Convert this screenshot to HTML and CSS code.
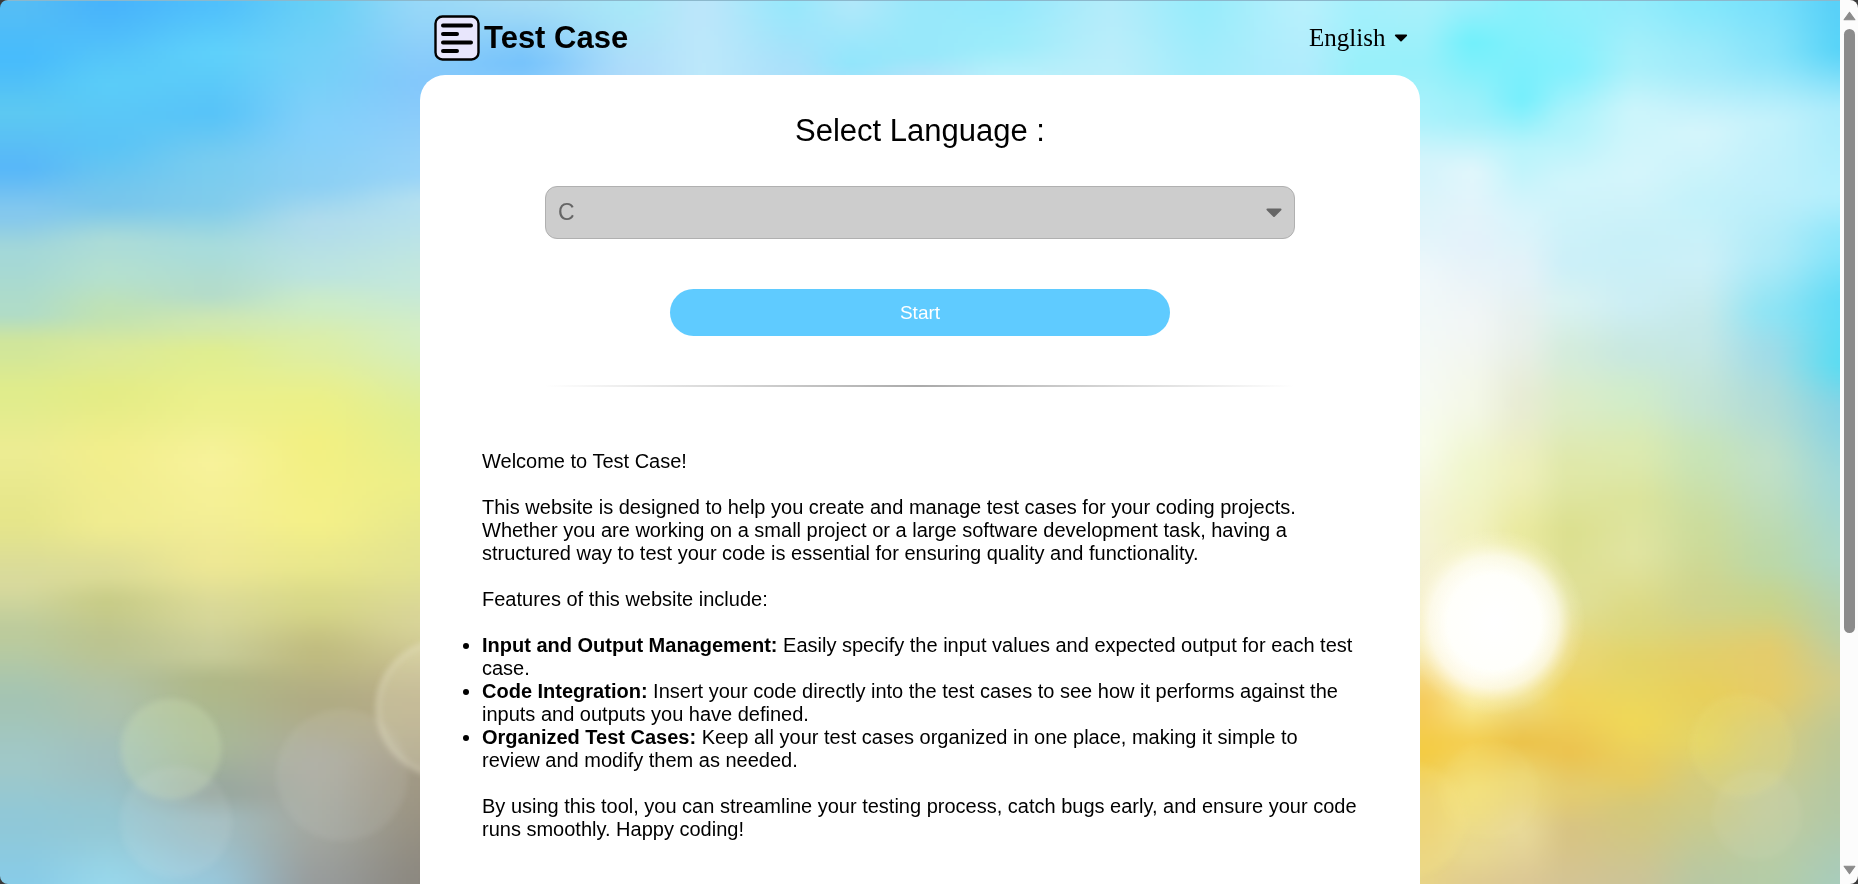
FILE: index.html
```html
<!DOCTYPE html>
<html lang="en">
<head>
<meta charset="utf-8">
<title>Test Case</title>
<link rel="stylesheet" href="styles.css">
</head>
<body>
<div class="window">
  <div class="viewport">
    <canvas class="backdrop" id="backdrop" width="460" height="221" aria-hidden="true"></canvas>
    <svg class="backdrop" viewBox="0 0 1840 884" preserveAspectRatio="none" aria-hidden="true">
      <defs>
        <radialGradient id="sun"><stop offset="0" stop-color="#fff"/><stop offset=".5" stop-color="#fffffb"/><stop offset=".7" stop-color="#fffdf4" stop-opacity=".75"/><stop offset=".85" stop-color="#fffae0" stop-opacity=".25"/><stop offset="1" stop-color="#fff8d0" stop-opacity="0"/></radialGradient>
        <filter id="soft"><feGaussianBlur stdDeviation="3"/></filter>
      </defs>
      <ellipse cx="1494" cy="622" rx="92" ry="94" fill="url(#sun)"/>
      <g filter="url(#soft)" fill="#fff">
        <circle cx="171" cy="749" r="49" fill="#d4e8b8" fill-opacity=".28" stroke="#d8ecc8" stroke-opacity=".2" stroke-width="2"/>
        <circle cx="176" cy="822" r="56" fill-opacity=".08"/>
        <circle cx="342" cy="775" r="66" fill-opacity=".07"/>
        <circle cx="445" cy="708" r="67" fill="#f0ecc8" fill-opacity=".26" stroke="#f4f0d8" stroke-opacity=".5" stroke-width="3"/>
        <circle cx="1742" cy="745" r="49" fill="#f0e878" fill-opacity=".14" stroke="#f0eca0" stroke-opacity=".15" stroke-width="2"/>
        <circle cx="1757" cy="815" r="45" fill-opacity=".05"/>
        <circle cx="1410" cy="820" r="56" fill="#fff08c" fill-opacity=".15"/>
        <circle cx="1490" cy="790" r="48" fill="#fff4a0" fill-opacity=".07"/>
      </g>
    </svg>
    <div class="page">
      <header class="header">
        <a class="brand" href="#">
          <svg class="logo" viewBox="0 0 46 46" aria-hidden="true">
            <rect x="1.500" y="1.500" width="43" height="43" rx="7" fill="#e8e6fc" stroke="#000" stroke-width="2.4"/>
            <path d="M9 10.500h28M9 19h14M9 27.500h28M9 36h14" fill="none" stroke="#000" stroke-width="4" stroke-linecap="round"/>
          </svg>
          <span>Test Case</span>
        </a>
        <div class="picker picker-locale">
          <select aria-label="Interface language"><option>English</option></select>
          <svg viewBox="0 0 16 10" aria-hidden="true"><path d="M2 2h12L8 8z"/></svg>
        </div>
      </header>
      <main class="card">
        <section class="setup">
          <label class="setup-title" for="lang">Select Language :</label>
          <div class="picker picker-lang">
            <select id="lang"><option>C</option></select>
            <svg viewBox="0 0 16 10" aria-hidden="true"><path d="M1.500 1.500h13L8 8z"/></svg>
          </div>
          <button class="start" type="button">Start</button>
          <hr class="divider">
        </section>
        <article class="intro">
          <p>Welcome to Test Case!</p>
          <p>This website is designed to help you create and manage test cases for your coding projects. Whether you are working on a small project or a large software development task, having a structured way to test your code is essential for ensuring quality and functionality.</p>
          <p>Features of this website include:</p>
          <ul>
            <li><b>Input and Output Management:</b> Easily specify the input values and expected output for each test case.</li>
            <li><b>Code Integration:</b> Insert your code directly into the test cases to see how it performs against the inputs and outputs you have defined.</li>
            <li><b>Organized Test Cases:</b> Keep all your test cases organized in one place, making it simple to review and modify them as needed.</li>
          </ul>
          <p>By using this tool, you can streamline your testing process, catch bugs early, and ensure your code runs smoothly. Happy coding!</p>
        </article>
      </main>
    </div>
  </div>
  <div class="scrollbar" aria-hidden="true">
    <svg viewBox="0 0 12 9"><path d="M6 1 11 8H1z"/></svg>
    <div class="track"><div class="thumb"></div></div>
    <svg viewBox="0 0 12 9"><path d="M6 8 1 1h10z"/></svg>
  </div>
</div>
<script src="backdrop.js"></script>
</body>
</html>
```

FILE: backdrop.js
```js
// Blurred sky: each column is [x, [y, colour], ...] on an 1840 x 884 plane.
const columns = [
  [20, "0 55bdf5,55 48bcfc,110 5cc8f2,165 58b8f8,210 84c8ee,250 a4d8d8,310 b0dcc8,340 d0e69c,390 e0ec8c,450 ecec92,515 e6e68a,580 d8da9c,630 bccb9c,700 a4c4b4,760 a0c8c8,820 90c8d8,884 88cce8"],
  [105, "0 48b4fb,80 5accf8,140 5ac4f6,200 78c6ec,240 acdcd8,270 b4e0d0,310 c0e2b4,350 dcea98,390 e4ec86,450 f2ee8c,520 f0ec90,570 dcdc96,600 c8cc88,640 bcc490,700 aec2ac,760 a0c0c0,820 94c8d4,884 98d8ec"],
  [210, "0 50c0fb,50 5ed0fa,110 58c4f8,160 78ccf0,200 80ccec,245 a8dcdc,290 b4dccb,320 d0e8b0,350 e0ee90,400 ecf08c,460 f7f29a,500 f5f096,560 eee894,610 d8d898,650 c8cc98,680 b0b888,740 a8b898,790 98a8a0,820 a0bcc0,884 98c8dc"],
  [315, "0 68d0f6,60 74d0f8,130 84d0fa,180 8cd0f4,220 b0dcec,270 bce4e0,300 ccecc8,340 dceea8,400 ecf088,440 f2f082,520 f4f088,560 eae88c,600 d8d888,650 c0bc80,700 b0ac84,760 acaca0,820 a4a8a0,884 989c9c"],
  [420, "0 98d8f8,80 84c8fb,170 98d4f8,200 b4e0f0,280 c4e8dc,330 d4eec4,420 e2ee90,480 ecee88,560 e4e490,620 d8d498,700 b8ac88,780 a09884,884 8c8880"],
  [520, "0 a4dcf6,60 78c4fb,100 90d0fa"],
  [630, "0 a8e8f8,75 b0dcfa"],
  [700, "0 bce6fa,75 bce8fa"],
  [790, "0 98e8fb,75 ace0fa"],
  [850, "0 b0e8fa,60 94e6fb,90 a8e0fa"],
  [920, "0 98e8fa,50 98e8fa,75 b0e4fa"],
  [1000, "0 94e9fc,40 9cecfa,75 b8f0fb"],
  [1110, "0 b4ecfa,75 bceefa"],
  [1200, "0 98ecfb,75 a4ecfb"],
  [1300, "0 b8f0fc,75 b0ecfc"],
  [1360, "0 a4f0fc,75 98f0fa"],
  [1420, "0 a8f0fa,60 98f0fa,110 a8f2fb,160 d4f4fb,220 e0f4fa,280 f0f8fa,380 f6faf4,440 f8fcec,520 f4f4d4,580 f4f0d0,640 f6ecb8,700 f6cc5c,750 f4cc44,800 ecd070,884 e8d488"],
  [1470, "0 98effb,40 74f0fb,110 a0f0fa,170 e0f6fb,240 e4f2fa,320 f2f6f6,400 f4f8e8,470 f0f6cc,530 f2f2c0,590 f6f4d0,670 fcf0c0,700 f8e890,740 f4d054,790 f2e07c,850 e8d890,884 e0cc90"],
  [1520, "0 88f0fb,95 78effc,150 bcf4fb,220 daf4fb,270 e4f2f8,330 e8f0ec,400 e8ecd4,470 eef0bc,530 eaeaa0,600 f0eeb8,690 f0e088,740 ecc44c,780 ecd878,830 e8d898,884 dcc894"],
  [1567, "0 90effb,65 84f0fd,120 b0f3fb,180 d0f5fb,260 ccf0f8,300 d8f2f2,350 d4ecdc,400 dcecc8,470 e0e8a8,530 dce090,600 e0e098,650 ead878,700 f0d45c,750 ecc450,790 e4cc70,830 d8c484,884 d4c494"],
  [1633, "0 94ecfb,60 a8f0fa,110 ccf5fb,170 d4f5fb,240 c8f0f8,300 cceef4,350 c8e8e0,390 d0eccc,450 dceab0,500 dce49c,550 e0e4a0,620 dcd880,660 e4d468,720 f0d858,770 e8cc60,810 d4c87c,884 ccc498"],
  [1700, "0 84e8fb,60 a0ebfa,130 d4f5fb,200 c4f2fa,260 ccf0f8,330 c4e8e8,400 c4e4d4,450 c8e4b8,530 ccdc9c,600 d0d48c,660 e4cf68,690 e8d05c,740 e4d468,780 d4cc80,884 b8c8a4"],
  [1767, "0 78e0fb,50 88e4fa,120 c4f2fb,180 c0f0fb,250 b0ebf8,310 90e4f4,350 a0dce8,400 b0dcd8,460 c0e0c8,560 bcd8a8,600 c8d48c,650 e4cc6c,690 e6cc68,740 d4cc84,800 c4cc9c,884 b4cca8"],
  [1840, "0 58d0f8,45 58d4f8,110 acecfb,190 b4effc,240 8ce6fa,300 64dcf6,360 5cdcf2,410 88d4e4,480 a0d8d8,550 acd8c8,620 b8d0a8,680 d0cc8c,740 bcc898,800 b4c8a4,884 a8ccbc"]
].map(([at, text]) => ({
  at,
  stops: text.split(",").map(pair => {
    const [y, hex] = pair.split(" ");
    const n = parseInt(hex, 16);
    return { at: Number(y), rgb: [n >> 16, (n >> 8) & 255, n & 255] };
  })
}));

const ease = t => t * t * (3 - 2 * t);

function bracket(list, value) {
  let i = 0;
  while (i < list.length - 2 && value > list[i + 1].at) i++;
  const a = list[i];
  const b = list[i + 1];
  const t = Math.min(1, Math.max(0, (value - a.at) / (b.at - a.at)));
  return [a, b, (t + ease(t)) / 2];
}

const mix = (a, b, t) => a.map((v, i) => v + (b[i] - v) * t);

function sample(column, y) {
  const [a, b, t] = bracket(column.stops, y);
  return mix(a.rgb, b.rgb, t);
}

const canvas = document.getElementById("backdrop");
const ctx = canvas.getContext("2d");
const image = ctx.createImageData(canvas.width, canvas.height);
for (let y = 0; y < canvas.height; y++) {
  for (let x = 0; x < canvas.width; x++) {
    const px = (x * 1840) / canvas.width;
    const py = (y * 884) / canvas.height;
    const [left, right, t] = bracket(columns, px);
    const rgb = mix(sample(left, py), sample(right, py), t);
    image.data.set([...rgb, 255], (y * canvas.width + x) * 4);
  }
}
ctx.putImageData(image, 0, 0);
```

FILE: styles.css
```css
* { box-sizing: border-box; }

body {
  margin: 0;
  background: #3a3a3a;
  color: #000;
  font-family: "Liberation Sans", Arial, sans-serif;
  font-size: 20px;
  line-height: 23px;
}

.window {
  display: flex;
  height: 100vh;
  overflow: hidden;
  border-radius: 8px;
}

.viewport {
  position: relative;
  flex: 1;
  overflow: hidden;
  border-top: 1px solid #8cb8cc;
}

.backdrop {
  position: absolute;
  inset: 0;
  width: 100%;
  height: 100%;
}

.page {
  position: relative;
  width: 100%;
  max-width: 1000px;
  margin: 0 auto;
}

.header {
  display: flex;
  align-items: center;
  justify-content: space-between;
  height: 74px;
  padding: 0 12px 0 14px;
}

.brand {
  display: flex;
  align-items: center;
  gap: 4px;
  color: inherit;
  font-size: 31px;
  font-weight: bold;
  line-height: 36px;
  text-decoration: none;
}

.logo {
  width: 46px;
  height: 46px;
}

.picker {
  display: grid;
  align-items: center;
}

.picker select {
  grid-area: 1 / 1;
  width: 100%;
  appearance: none;
  border: 0;
  background: none;
  color: inherit;
  font: inherit;
}

.picker svg {
  grid-area: 1 / 1;
  justify-self: end;
  width: 16px;
  height: 10px;
  fill: currentColor;
  stroke: currentColor;
  stroke-width: 2;
  stroke-linejoin: round;
  pointer-events: none;
}

.picker-locale {
  width: 99px;
  font-family: "Liberation Serif", "Times New Roman", serif;
  font-size: 25px;
  line-height: 28px;
}

.picker-locale select { padding: 0; }

.picker-locale svg { width: 14px; }

.card {
  min-height: 100vh;
  padding: 37px 62px;
  border-radius: 25px 25px 0 0;
  background: #fff;
}

.setup {
  display: flex;
  flex-direction: column;
  align-items: center;
  max-width: 750px;
  margin: 0 auto;
}

.setup-title {
  font-size: 31px;
  line-height: 37px;
}

.picker-lang {
  width: 100%;
  margin-top: 37px;
  color: #666;
  font-size: 23px;
}

.picker-lang select {
  height: 53px;
  padding: 0 12px;
  border: 1px solid #b0b0b0;
  border-radius: 12px;
  background: #cdcdcd;
}

.picker-lang svg { margin-right: 13px; }

.start {
  width: 500px;
  max-width: 100%;
  height: 47px;
  margin-top: 50px;
  border: 0;
  border-radius: 24px;
  background: #5fcbff;
  color: #fff;
  font: inherit;
  font-size: 19px;
}

.divider {
  width: 100%;
  height: 2px;
  margin: 49px 0 0;
  border: 0;
  background: linear-gradient(to right, transparent, #aaa, transparent);
}

.intro { padding-top: 63px; }

.intro p,
.intro ul { margin: 0 0 23px; }

.intro ul { padding: 0; }

.scrollbar {
  display: flex;
  flex-direction: column;
  align-items: center;
  gap: 8px;
  width: 18px;
  padding: 11px 0 9px;
  background: #fcfcfc;
}

.scrollbar svg {
  width: 13px;
  height: 10px;
  fill: #8b8b8b;
  stroke: #8b8b8b;
  stroke-linejoin: round;
}

.track {
  flex: 1;
  width: 11px;
}

.thumb {
  height: 73%;
  border-radius: 6px;
  background: #8b8b8b;
}
```
